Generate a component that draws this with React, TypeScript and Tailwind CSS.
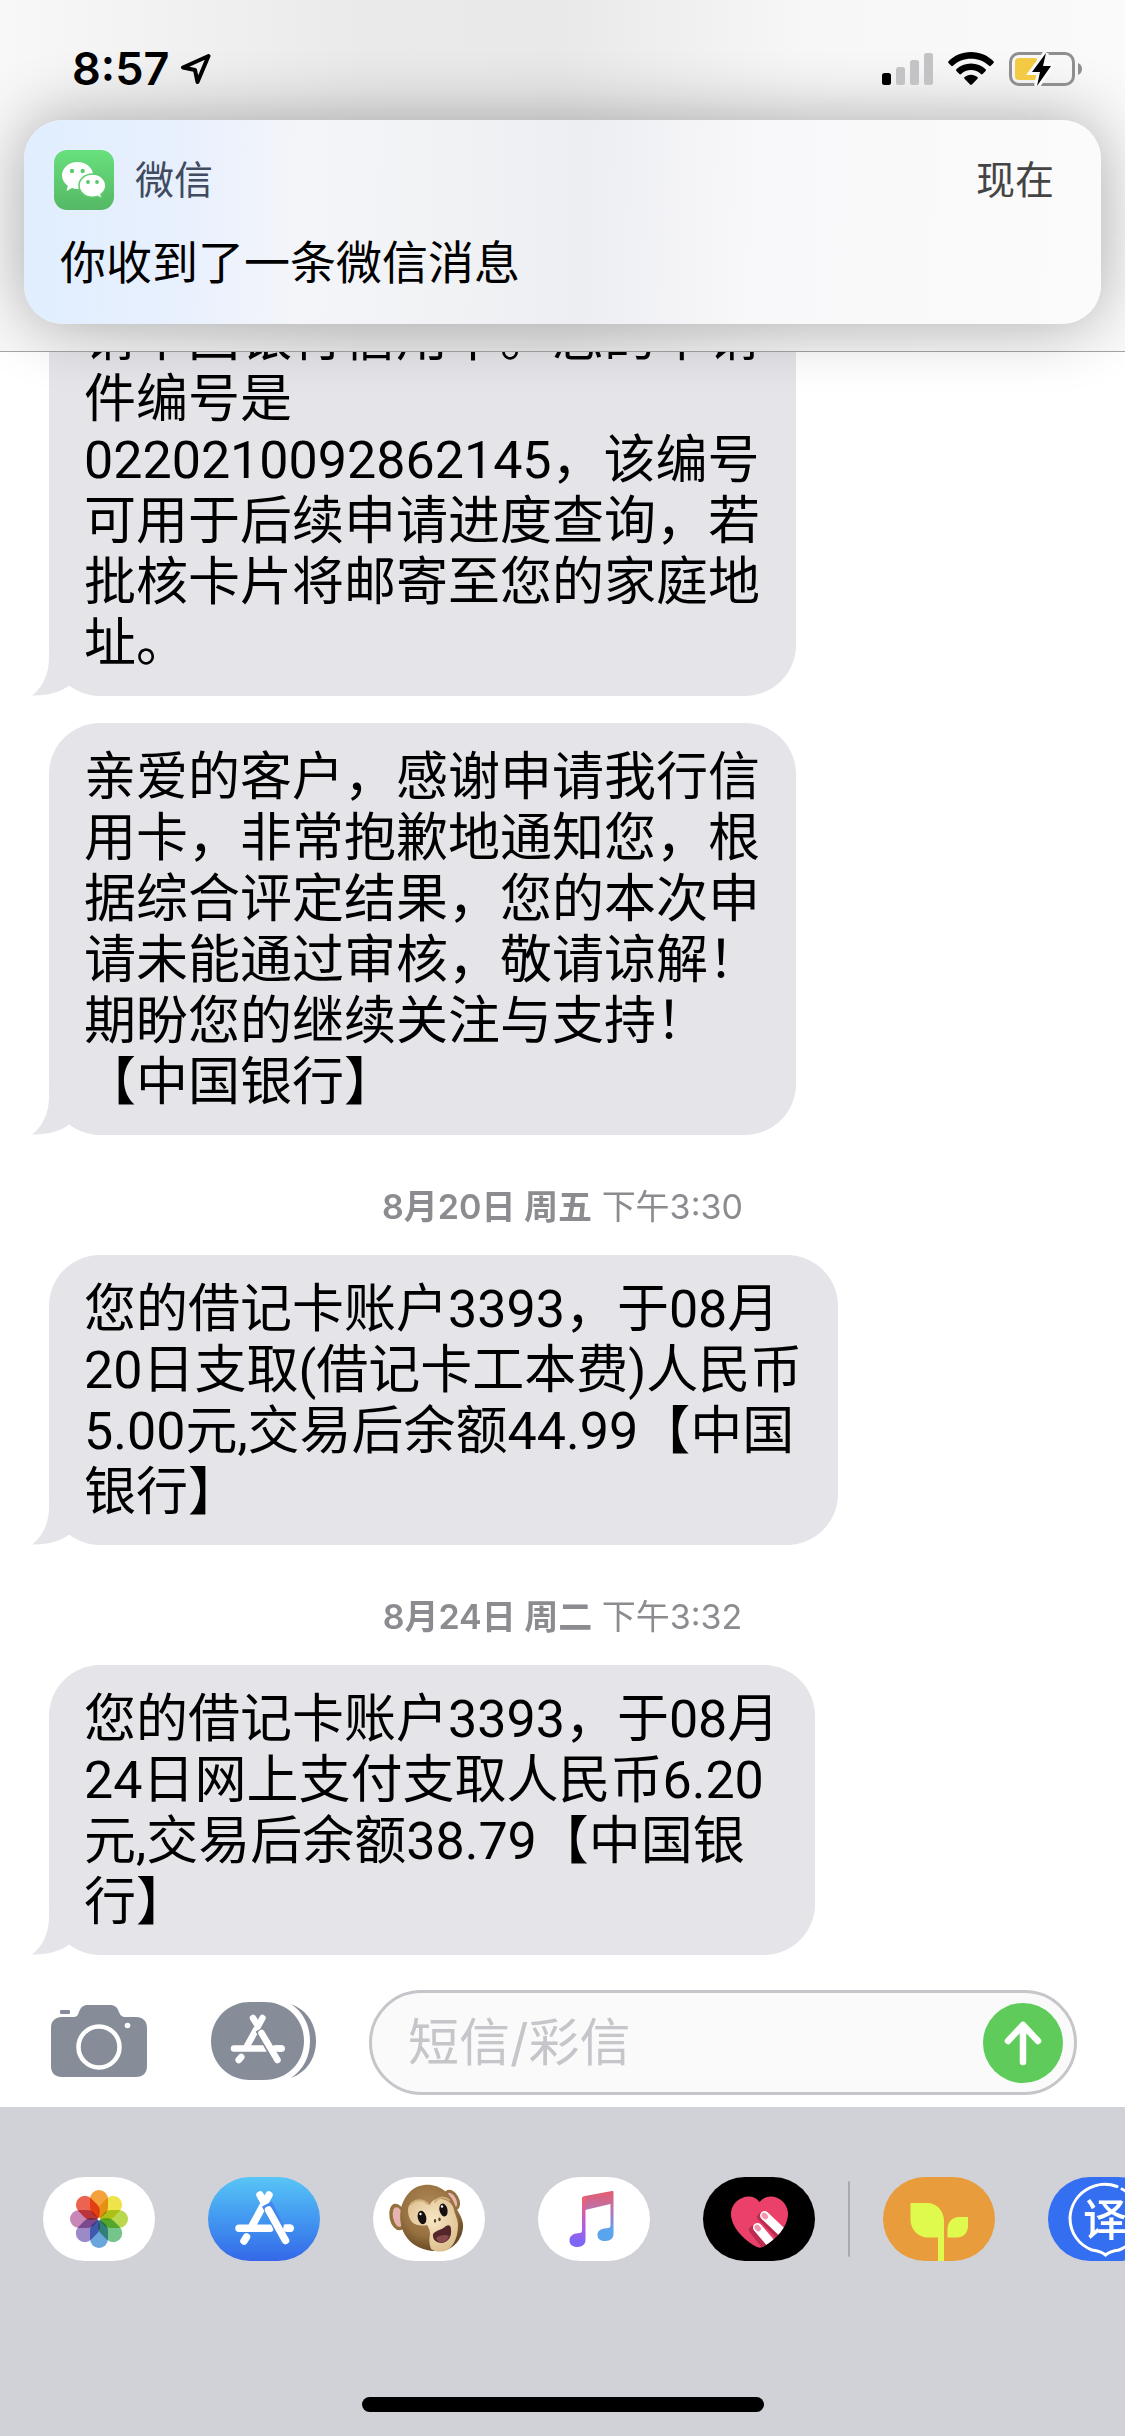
import type { ReactNode } from 'react';

type Message = {
  date?: string;
  time?: string;
  lines: string[];
};

const messages: Message[] = [
  {
    lines: ['请中国银行信用卡。您的申请', '件编号是', '0220210092862145，该编号', '可用于后续申请进度查询，若', '批核卡片将邮寄至您的家庭地', '址。'],
  },
  {
    lines: ['亲爱的客户，感谢申请我行信', '用卡，非常抱歉地通知您，根', '据综合评定结果，您的本次申', '请未能通过审核，敬请谅解！', '期盼您的继续关注与支持！', '【中国银行】'],
  },
  {
    date: '8月20日 周五',
    time: '下午3:30',
    lines: ['您的借记卡账户3393，于08月', '20日支取(借记卡工本费)人民币', '5.00元,交易后余额44.99【中国', '银行】'],
  },
  {
    date: '8月24日 周二',
    time: '下午3:32',
    lines: ['您的借记卡账户3393，于08月', '24日网上支付支取人民币6.20', '元,交易后余额38.79【中国银', '行】'],
  },
];

const petals = [
  { angle: 0, color: '#f4a23c' },
  { angle: 45, color: '#efe34c' },
  { angle: 90, color: '#b9d84f' },
  { angle: 135, color: '#74c48c' },
  { angle: 180, color: '#6aa5dc' },
  { angle: 225, color: '#9c8ac8' },
  { angle: 270, color: '#c987b8' },
  { angle: 315, color: '#ec6350' },
];

function StatusBar() {
  return (
    <div className="flex h-[120px] items-center justify-between pt-[18px] pr-[43px] pl-[72px]">
      <div className="flex items-center gap-3">
        <span className="text-[45px] leading-[48px] font-semibold">8:57</span>
        <svg width="30" height="30" viewBox="0 0 30 30" fill="none" stroke="#000" strokeWidth="4" strokeLinejoin="round">
          <path d="M27.500 2 2 13.500l12 2.500L16.500 28z" />
        </svg>
      </div>
      <div className="flex items-center gap-[15px]">
        <svg width="51" height="34" viewBox="0 0 51 34">
          <rect x="0" y="21" width="9" height="12" rx="2.500" fill="#000" />
          <rect x="14" y="15" width="9" height="18" rx="2.500" fill="#c3c3c5" />
          <rect x="28" y="8" width="9" height="25" rx="2.500" fill="#c3c3c5" />
          <rect x="42" y="1" width="9" height="32" rx="2.500" fill="#c3c3c5" />
        </svg>
        <svg width="46" height="34" viewBox="0 0 46 34">
          <path d="M23 0C32 0 40 3.500 45.500 9.300c.5.600.5 1.200 0 1.700l-2.700 2.800c-.5.500-1.200.5-1.700 0C36.300 9.300 30 6.700 23 6.700S9.700 9.300 4.900 13.800c-.5.500-1.200.5-1.700 0L.5 11c-.5-.5-.5-1.100 0-1.700C6 3.500 14 0 23 0z" />
          <path d="M23 11.500c5.700 0 10.800 2.200 14.600 5.800.5.500.5 1.200 0 1.700l-3 3c-.5.500-1.100.5-1.700 0-2.600-2.400-6.100-3.900-9.900-3.900s-7.300 1.500-9.900 3.900c-.6.500-1.200.5-1.700 0l-3-3c-.5-.5-.5-1.200 0-1.700 3.800-3.600 8.900-5.800 14.600-5.800z" />
          <path d="M23 22.700c2.500 0 4.700.9 6.400 2.400.6.500.6 1.200.1 1.700l-5.600 5.800c-.5.500-1.300.5-1.800 0l-5.600-5.800c-.5-.5-.5-1.200.1-1.700 1.700-1.500 3.900-2.400 6.400-2.400z" />
        </svg>
        <svg width="73" height="34" viewBox="0 0 73 34">
          <rect x="1.500" y="1.500" width="63" height="31" rx="8.500" fill="none" stroke="#8f8f91" strokeWidth="3" />
          <path d="M69 11v12c2.500-.8 4-3.200 4-6s-1.500-5.200-4-6z" fill="#8f8f91" />
          <rect x="6" y="6" width="23" height="22" rx="4" fill="#f4c944" />
          <path d="M37 1 23 20h8l-3 14 14-20h-8z" fill="#000" stroke="#fafafa" strokeWidth="6" />
          <path d="M37 1 23 20h8l-3 14 14-20h-8z" fill="#000" />
        </svg>
      </div>
    </div>
  );
}

function WeChatIcon() {
  return (
    <svg width="60" height="60" viewBox="0 0 60 60">
      <defs>
        <linearGradient id="wechat" x1="0" y1="0" x2="0" y2="1">
          <stop offset="0" stopColor="#68e07d" />
          <stop offset="1" stopColor="#55b865" />
        </linearGradient>
      </defs>
      <rect width="60" height="60" rx="13" fill="url(#wechat)" />
      <path d="M23.500 12C14.800 12 8 18 8 25.500c0 4.300 2.300 7.800 5.800 10.300L12.600 41l5.400-3c1.800.6 3.600.9 5.500.9 8.700 0 15.700-6 15.700-13.400S32.200 12 23.500 12z" fill="#fff" />
      <path d="M38.500 24c-7.500 0-13.500 5.100-13.500 11.600S31 47.200 38.500 47.200c1.700 0 3.300-.3 4.800-.8l4.700 2.200-1-4.200c3-2.100 4.800-5.200 4.800-8.800C51.800 29.100 46 24 38.500 24z" fill="#fff" stroke="#5ecb70" strokeWidth="1.500" />
      <circle cx="18" cy="21" r="2.200" fill="#5ecb70" />
      <circle cx="28.700" cy="21" r="2.200" fill="#5ecb70" />
      <circle cx="34" cy="32" r="1.900" fill="#5ac46b" />
      <circle cx="43" cy="32" r="1.900" fill="#5ac46b" />
    </svg>
  );
}

function Notification() {
  return (
    <article className="mx-6 h-[204px] rounded-[39px] bg-[linear-gradient(92deg,#e0eeff_0%,#e8f0fe_14%,#f4f5f9_26%,#f1f2f4_40%,#edeef2_52%,#f8f8fa_68%,#fbfbfb_100%)] px-[30px] pt-[30px] shadow-[0_0_66px_rgba(0,0,0,0.32)]">
      <div className="flex items-center">
        <WeChatIcon />
        <h2 className="ml-[21px] text-[39px] leading-[60px] text-[#414b60]">微信</h2>
        <time className="ml-auto pr-[17px] text-[39px] leading-[60px] text-[#444]">现在</time>
      </div>
      <p className="mt-[22px] pl-[6px] text-[46px] leading-[60px]">你收到了一条微信消息</p>
    </article>
  );
}

function Bubble({ lines }: { lines: string[] }) {
  return (
    <div className="relative w-fit rounded-[51px] bg-[#e5e4e9] pt-6 pr-9 pb-[22px] pl-[35px] font-['Roboto','Noto_Sans_CJK_SC',sans-serif] text-[52px] leading-[61px] whitespace-nowrap">
      <svg className="absolute bottom-0 -left-[17px]" width="60" height="46" viewBox="0 0 60 46">
        <path d="M17 0v8c0 17-7 30-17 37.500C15 46 29 42 38 35L60 20V0z" fill="#e5e4e9" />
      </svg>
      <p className="relative">
        {lines.map((line) => (
          <span key={line} className="block">
            {line}
          </span>
        ))}
      </p>
    </div>
  );
}

function Conversation() {
  return (
    <main className="flex min-h-0 flex-1 flex-col justify-end overflow-hidden pr-6 pl-[49px]">
      {messages.map((message, i) => (
        <section key={i} className="shrink-0">
          {message.date ? (
            <p className="-ml-[25px] pt-12 pb-6 text-center text-[34px] leading-[48px] text-[#8b8b90]">
              <span className="font-semibold">{message.date}</span> {message.time}
            </p>
          ) : (
            <div className="h-[27px]" />
          )}
          <Bubble lines={message.lines} />
        </section>
      ))}
    </main>
  );
}

function Composer() {
  return (
    <form className="flex items-center pt-[35px] pr-12 pb-3 pl-[51px]" onSubmit={(e) => e.preventDefault()}>
      <button type="button" aria-label="相机" className="mr-16 mb-1">
        <svg width="96" height="72" viewBox="0 0 96 72">
          <path d="M11 12h11c4 0 5-2 6-5 2-5 4-7 9-7h22c5 0 7 2 9 7 1 3 3 5 7 5h10c7 0 11 4 11 11v38c0 7-4 11-11 11H11C4 72 0 68 0 61V23c0-7 4-11 11-11z" fill="#868d99" />
          <rect x="9" y="5" width="10" height="4" rx="1" fill="#868d99" />
          <circle cx="48" cy="42" r="20.500" fill="none" stroke="#fff" strokeWidth="4.500" />
          <circle cx="76.500" cy="20.500" r="2.800" fill="#fff" />
        </svg>
      </button>
      <button type="button" aria-label="App" className="mr-[53px] mb-1">
        <svg width="105" height="78" viewBox="0 0 105 78">
          <path d="M39 0h14c23 0 40 17 40 39S76 78 53 78H39C17 78 0 61 0 39S17 0 39 0z" fill="#868d99" />
          <path d="M80 2c16 6 25 20 25 37s-9 31-25 37c12-8 19-21 19-37S92 10 80 2z" fill="#868d99" />
          <g stroke="#fff" strokeWidth="6.500" strokeLinecap="round">
            <path d="M42 16l5 8M51.500 16 36 44M23 46.500h47.500M30.300 55l-2.600 3" />
            <path d="M49 27 67 60" stroke="#868d99" strokeWidth="10" strokeLinecap="butt" />
            <path d="M50.500 31 66.500 58" />
          </g>
          <path d="M64 46.500h6.500" stroke="#fff" strokeWidth="6.500" strokeLinecap="round" />
        </svg>
      </button>
      <div className="flex h-[105px] min-w-0 flex-1 items-center rounded-full border-[3px] border-[#c5c5ca] bg-[#fafafa] pr-[11px] pl-9">
        <input
          type="text"
          aria-label="短信/彩信"
          placeholder="短信/彩信"
          className="min-w-0 flex-1 bg-transparent text-[51px] leading-[66px] outline-none placeholder:text-[#c5c5ca]"
        />
        <button type="submit" aria-label="发送" className="flex size-20 items-center justify-center rounded-full bg-[#5ecb5b]">
          <svg width="80" height="80" viewBox="0 0 80 80" fill="none" stroke="#fff" strokeWidth="6.500" strokeLinecap="round" strokeLinejoin="round">
            <path d="M40 59V22M25 38l15-16 15 16" />
          </svg>
        </button>
      </div>
    </form>
  );
}

function TrayApp({ label, className, children }: { label: string; className: string; children: ReactNode }) {
  return (
    <button type="button" aria-label={label} className={`h-[84px] w-[112px] shrink-0 overflow-hidden rounded-full ${className}`}>
      <svg width="112" height="84" viewBox="0 0 112 84">
        {children}
      </svg>
    </button>
  );
}

function AppTray() {
  return (
    <nav className="flex items-center overflow-hidden pl-[43px]">
      <div className="flex gap-[53px]">
        <TrayApp label="照片" className="bg-white">
          <g className="isolate">
            {petals.map((petal) => (
              <path
                key={petal.angle}
                className="mix-blend-multiply"
                transform={`translate(56 42) rotate(${petal.angle})`}
                d="M0 0-6-5c-2-2-3-4-3-7v-8a9 9 0 0 1 18 0v8c0 3-1 5-3 7z"
                fill={petal.color}
              />
            ))}
          </g>
          <circle cx="56" cy="42" r="1.500" fill="#fff" />
        </TrayApp>

        <TrayApp label="App Store" className="bg-linear-to-b from-[#59c5f6] to-[#3567e8]">
          <g stroke="#fff" strokeWidth="7.500" strokeLinecap="round" fill="none">
            <path d="M52 18l5 9M61 18 44 49M31 51.300h31M73 51.300h9M38.500 60l-2.500 4" />
            <path d="M59 27 78 65" stroke="#4387ee" strokeWidth="11" strokeLinecap="butt" />
            <path d="M60.500 33 77.500 63.500" />
            <path d="M79 51.300h3" />
          </g>
        </TrayApp>

        <TrayApp label="拟我表情" className="bg-white">
          <defs>
            <radialGradient id="fur" cx="0.45" cy="0.35" r="0.65">
              <stop offset="0" stopColor="#b08a58" />
              <stop offset="0.65" stopColor="#96713f" />
              <stop offset="1" stopColor="#684a24" />
            </radialGradient>
            <radialGradient id="face" cx="0.5" cy="0.4" r="0.65">
              <stop offset="0" stopColor="#f7e6c4" />
              <stop offset="1" stopColor="#dcbd8c" />
            </radialGradient>
          </defs>
          <ellipse cx="24.500" cy="40" rx="8" ry="13.500" transform="rotate(-12 24.500 40)" fill="#94703f" />
          <ellipse cx="25" cy="40" rx="5" ry="10" transform="rotate(-12 25 40)" fill="#e7b3ae" />
          <ellipse cx="79" cy="23" rx="7" ry="11" transform="rotate(-28 79 23)" fill="#94703f" />
          <ellipse cx="79" cy="23" rx="4" ry="8" transform="rotate(-28 79 23)" fill="#e7b3ae" />
          <path d="M51 8c14-2 27 8 31 20 2 6 7 11 8 19 1 12-8 26-22 27-14 1-29-4-36-16-6-10-6-24-2-33 4-9 11-16 21-17z" fill="url(#fur)" />
          <path d="M35 33c0-6 5-9 10-9 5-1 9 1 12 4 1-4 6-7 11-6 7 0 12 5 13 11 1 5 4 9 4 15 0 13-5 23-13 26-5 1-10 1-14-2-2-5-2-10-1-15 0-3-1-6-3-9-4 1-11 1-15-3-3-3-4-8-4-12z" fill="url(#face)" />
          <path d="M38 27c5-5 12-5 17 0M62 25c3-5 9-6 14-2" fill="none" stroke="#d0ae79" strokeWidth="2" strokeLinecap="round" />
          <ellipse cx="49" cy="40.500" rx="4.200" ry="6.800" transform="rotate(-14 49 40.500)" fill="#16110f" />
          <ellipse cx="70.500" cy="33" rx="4" ry="6.500" transform="rotate(-14 70.500 33)" fill="#16110f" />
          <circle cx="47.500" cy="37" r="1.200" fill="#fff" />
          <circle cx="69" cy="29.500" r="1.200" fill="#fff" />
          <ellipse cx="62" cy="43.800" rx="1.200" ry="1.900" fill="#5a3d22" />
          <ellipse cx="66.500" cy="42.300" rx="1.200" ry="1.900" fill="#5a3d22" />
          <path d="M60 57c3-4 9-4 13-8 3-2 5 0 5 3 1 8-3 13-9 14-5 0-10-3-9-9z" fill="#54262a" />
          <path d="M63 61c4-3 9-4 13-2-1 4-4 6-7 6.500-3 0-5-2-6-4.500z" fill="#85494e" />
        </TrayApp>

        <TrayApp label="音乐" className="bg-white">
          <defs>
            <linearGradient id="note-left" gradientUnits="userSpaceOnUse" x1="50" y1="16" x2="42" y2="70">
              <stop offset="0.100" stopColor="#ef6468" />
              <stop offset="0.600" stopColor="#b45be0" />
              <stop offset="0.900" stopColor="#7f66f5" />
            </linearGradient>
            <linearGradient id="note-right" gradientUnits="userSpaceOnUse" x1="60" y1="16" x2="60" y2="66">
              <stop offset="0" stopColor="#e35d72" />
              <stop offset="0.350" stopColor="#b574b4" />
              <stop offset="0.750" stopColor="#5aa4ee" />
            </linearGradient>
          </defs>
          <path d="M44 22c0-2 1-2.500 3-3l27-5c1-.2 1.500.2 1.500 1.200V57c0 4-3 7-8 7s-8-2-8-6 3-6 7-6.500l3.500-.5c2-.3 2.500-1 2.500-3V27L47 33z" fill="url(#note-right)" />
          <path d="M44 22c0-2 1-2.500 3-3l.5-.1V63c0 4-3 7-8 7s-8-2.500-8-6.500 3-6.500 6.500-7l3.500-.5c2-.3 2.500-1 2.500-3z" fill="url(#note-left)" />
        </TrayApp>

        <TrayApp label="健康" className="bg-black">
          <clipPath id="heart">
            <path d="M56.600 25C52 19 45 18.500 39 21c-7 3-11 9-11 16 0 13 13 26 25 32.500 2.500 1.500 5 1.500 7.500 0C72 63 85 50 85 37c0-7-4-13-10.500-16-6-2.500-13-2-17.900 4z" />
          </clipPath>
          <g clipPath="url(#heart)">
            <rect width="112" height="84" fill="#eb4069" />
            <path d="M50 53 65 72M58 40 77 59" stroke="#bd2c50" strokeWidth="8" strokeLinecap="round" />
            <path d="M54.500 50.500 71 70M61.500 38.500 81 57" stroke="#fff" strokeWidth="9" strokeLinecap="round" />
            <ellipse cx="54.700" cy="51" rx="2.800" ry="3.600" transform="rotate(-42 54.700 51)" fill="#f395ae" />
            <ellipse cx="61.800" cy="39" rx="2.800" ry="3.600" transform="rotate(-42 61.800 39)" fill="#f395ae" />
          </g>
        </TrayApp>
      </div>

      <div className="mx-[33px] h-[76px] w-[2px] shrink-0 rounded-full bg-[#a9aaae]" />

      <div className="flex gap-[53px]">
        <TrayApp label="种子" className="bg-[#e89c3c]">
          <path d="M27.500 26H44c10 0 17 8 17 18v40h-6V60.500H45c-10 0-17.500-8-17.500-18z" fill="#dffa4d" />
          <path d="M85 40v9c0 7-5 11.500-11 11.500h-9.500V52c0-7 5-12 11-12z" fill="#dffa4d" />
        </TrayApp>
        <TrayApp label="翻译" className="bg-[#346ef1]">
          <path d="M69 9.500A35 35 0 0 0 22 41c0 15 9 27 22 32 7 1 10 2 13.500 5 3.500-3 6.500-4 13.500-5 13-5 21-17 21-32 0-12-7-23-18-29" fill="none" stroke="#fff" strokeWidth="3" strokeLinecap="round" />
          <text x="35" y="59" fontSize="44" fontWeight="500" fill="#fff">
            译
          </text>
        </TrayApp>
      </div>
    </nav>
  );
}

export default function App() {
  return (
    <div className="flex h-screen flex-col overflow-hidden bg-white font-['Inter','Noto_Sans_CJK_SC',sans-serif] text-black" lang="zh-CN">
      <header className="relative z-10 h-[352px] shrink-0 border-b border-[#a4a5a6] bg-[linear-gradient(90deg,#f8f8f8_0%,#eaeaeb_32%,#e9e9ea_50%,#f7f7f8_72%,#fafafa_100%)]">
        <StatusBar />
        <Notification />
      </header>

      <Conversation />
      <Composer />

      <footer className="flex h-[329px] shrink-0 flex-col justify-between bg-[#d1d2d8] pt-[70px] pb-6">
        <AppTray />
        <div className="mx-auto h-[15px] w-[402px] rounded-full bg-black" />
      </footer>
    </div>
  );
}
